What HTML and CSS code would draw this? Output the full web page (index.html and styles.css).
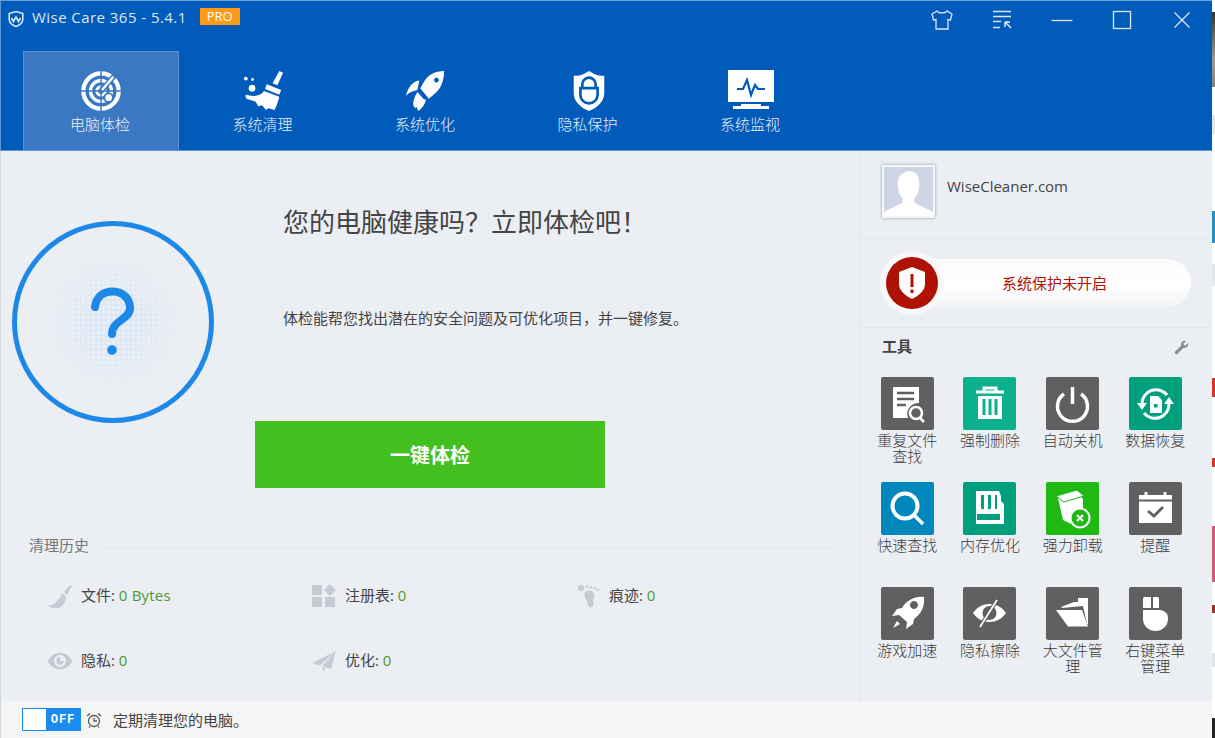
FILE: index.html
```html
<!DOCTYPE html>
<html lang="zh-CN">
<head>
  <meta charset="UTF-8" />
  <title>Wise Care 365</title>
  <link rel="stylesheet" href="styles.css">
</head>
<body>
  <div class="window">
    <div class="top-bar">
      <div class="title-row">
        <svg class="app-logo" viewBox="0 0 18 18"><path d="M9 1.500 L15.800 3.600 V9 C15.800 12.600 12.600 15.200 9 16.500 C5.400 15.200 2.200 12.600 2.200 9 V3.600 Z" fill="none" stroke="#dce8f5" stroke-width="1.600"/><path d="M4.500 8 L6.500 11.500 L9 7 L11.500 11.500 L13.500 8" fill="none" stroke="#dce8f5" stroke-width="1.600"/></svg>
        <span class="app-name">Wise Care 365 - 5.4.1</span>
        <span class="pro-badge">PRO</span>
        <div class="win-btns">
          <svg class="win-btn" viewBox="0 0 30 24"><path d="M10 3 L5 6 L6.500 12 L9 11.500 V21 H21 V11.500 L23.500 12 L25 6 L20 3 C19 5.500 11 5.500 10 3 Z" fill="none" stroke="#dce8f5" stroke-width="1.300"/></svg>
          <svg class="win-btn" viewBox="0 0 30 24"><path d="M6 3.500 H24 M6 8.500 H24 M6 13.500 H14 M6 19.500 H13" stroke="#dce8f5" stroke-width="1.300" fill="none"/><path d="M18 14 H23 M18 14 V19 M18.500 14.500 L24 20" stroke="#dce8f5" stroke-width="1.500" fill="none"/></svg>
          <svg class="win-btn" viewBox="0 0 30 24"><path d="M4.500 12.500 H25.500" stroke="#dce8f5" stroke-width="1.300"/></svg>
          <svg class="win-btn" viewBox="0 0 30 24"><rect x="6.500" y="3.500" width="17" height="17" fill="none" stroke="#dce8f5" stroke-width="1.300"/></svg>
          <svg class="win-btn" viewBox="0 0 30 24"><path d="M7.500 4.500 L22.500 19.500 M22.500 4.500 L7.500 19.500" stroke="#dce8f5" stroke-width="1.300"/></svg>
        </div>
      </div>
      <nav class="tabs">
        <a class="tab active">
          <svg class="tab-icon" viewBox="0 0 44 44" fill="none" stroke="#fff"><circle cx="22" cy="22" r="18.500" stroke-width="4.500"/><circle cx="22" cy="22" r="11" stroke-width="3.500"/><circle cx="22" cy="22" r="4.500" stroke-width="3"/><path d="M22 1 V43 M1 22 H43" stroke="#3b78c2" stroke-width="1.500"/><path d="M23 21 L36 6" stroke="#3b78c2" stroke-width="5.500"/><path d="M23 21 L35 7" stroke-width="2.500"/><circle cx="30" cy="29" r="5.500" fill="#3b78c2" stroke="none"/><circle cx="30" cy="29" r="3.500" fill="#fff" stroke="none"/></svg>
          <span>电脑体检</span>
        </a>
        <a class="tab">
          <svg class="tab-icon" viewBox="0 0 44 44" fill="#fff"><circle cx="3" cy="9" r="2"/><circle cx="10" cy="10" r="1.500"/><circle cx="9.500" cy="19" r="3.500"/><path d="M38 1 L42 3 L36 16 L31 14 Z"/><path d="M25 15 L40 21 L38 26 L23 20 Z"/><path d="M22 22 L38 28 C37 33 35 38 33 42 L27 40 L24 42 L20 37 L16 38 L13 33 L6 31 C3 30 2 28 3 26 C10 28 18 28 22 22 Z"/></svg>
          <span>系统清理</span>
        </a>
        <a class="tab">
          <svg class="tab-icon" viewBox="0 0 44 44" fill="#fff"><path d="M41 1 C32 1 24 5 20 12 L16 19 L25 30 L32 24 C38 19 41 10 41 1 Z M33 8 A2.500 2.500 0 1 1 32.900 8 Z" fill-rule="evenodd"/><path d="M15 11 C8 12 3 18 1 27 C5 23 9 22 13 21 Z"/><path d="M22 31 C21 36 18 40 14 43 C12 40 12 37 14 34 L18 31 Z"/><path d="M13 23 L20 31 L11 40 C8 38 7 33 13 23 Z"/></svg>
          <span>系统优化</span>
        </a>
        <a class="tab">
          <svg class="tab-icon" viewBox="0 0 44 44"><path d="M22 1 L27 4 C30 6 34 6 38 6 V24 C38 33 31 39 22 43 C13 39 6 33 6 24 V6 C10 6 14 6 17 4 Z" fill="#fff"/><path d="M15 19 V15 A7 7 0 0 1 29 15 V19" fill="none" stroke="#005bbb" stroke-width="2.800"/><path d="M13 19 H31 V26 A9 9 0 0 1 13 26 Z" fill="none" stroke="#005bbb" stroke-width="2.800"/></svg>
          <span>隐私保护</span>
        </a>
        <a class="tab">
          <svg class="tab-icon monitor" viewBox="0 0 46 40"><path d="M0 0 H46 V32 H0 Z" fill="#fff"/><path d="M9 19 H15 L19 10 L23 25 L27 15 L30 19 H37" fill="none" stroke="#005bbb" stroke-width="2.200"/><path d="M13 34 H33 V36 H41 V39 H5 V36 H13 Z" fill="#fff"/></svg>
          <span>系统监视</span>
        </a>
      </nav>
    </div>

    <div class="content">
      <main class="main">
        <section class="hero">
          <div class="scan-ring">
            <div class="scan-dots"></div>
            <svg class="scan-mark" viewBox="0 0 50 70"><path d="M7 20 C8 10 15 4.500 25 4.500 C35 4.500 42 12 42 21 C42 33 24 33 24 47" fill="none" stroke="#1e88e8" stroke-width="8" stroke-linecap="round"/><circle cx="24" cy="63" r="4.800" fill="#1e88e8"/></svg>
          </div>
          <div class="hero-text">
            <h1>您的电脑健康吗？立即体检吧！</h1>
            <p>体检能帮您找出潜在的安全问题及可优化项目，并一键修复。</p>
            <button class="scan-btn">一键体检</button>
          </div>
        </section>

        <section class="history">
          <div class="history-head"><span>清理历史</span><i></i></div>
          <div class="history-grid">
            <div class="history-item">
              <svg viewBox="0 0 24 24" fill="#c5cbd3"><path d="M22 1 L24 2 L19 11 L16 8 Z"/><path d="M14 9 L18 13 C18 18 15 22 11 24 C7 24 3 24 0 22 C6 21 11 17 14 9 Z"/></svg>
              <span>文件: <b>0 Bytes</b></span>
            </div>
            <div class="history-item">
              <svg viewBox="0 0 24 24" fill="#c5cbd3"><rect x="0" y="1" width="10" height="10"/><rect x="0" y="13" width="10" height="10"/><rect x="13" y="13" width="10" height="10"/><path d="M18 0 L24 6 L18 12 L12 6 Z"/></svg>
              <span>注册表: <b>0</b></span>
            </div>
            <div class="history-item">
              <svg viewBox="0 0 24 24" fill="#c5cbd3"><circle cx="5" cy="4" r="3"/><circle cx="11" cy="2.500" r="1.300"/><circle cx="15" cy="3" r="1.300"/><circle cx="19" cy="4" r="1.300"/><circle cx="22" cy="6" r="1.300"/><path d="M9 8 C14 5 20 8 18 14 C17 17 18 20 17 22 C16 24 12 24 12 21 C12 17 7 13 9 8 Z"/></svg>
              <span>痕迹: <b>0</b></span>
            </div>
            <div class="history-item">
              <svg viewBox="0 0 26 24" fill="#c5cbd3"><path fill-rule="evenodd" d="M0 12 C5 0 21 0 26 12 C21 24 5 24 0 12 Z M13 5.500 A6.500 6.500 0 1 0 13.100 5.500 Z"/><path d="M13 8 A4 4 0 1 0 17 12 L13 12 Z"/></svg>
              <span>隐私: <b>0</b></span>
            </div>
            <div class="history-item">
              <svg viewBox="0 0 24 24" fill="#c5cbd3"><path d="M24 2 L0 14 L8 16.500 Z"/><path d="M24 2 L10 17 L19 20 Z"/><path d="M10 18 L12 23 L13 19 Z"/></svg>
              <span>优化: <b>0</b></span>
            </div>
          </div>
        </section>
      </main>

      <aside class="side">
        <div class="profile">
          <div class="avatar">
            <svg viewBox="0 0 50 50"><rect width="50" height="50" fill="#ced6e6"/><path d="M25 4 C32 4 36 8 36 17 C36 24 34 29 31 32 V36 C36 40 44 42 50 46 V50 H0 V46 C6 42 14 40 19 36 V32 C16 29 14 24 14 17 C14 9 18 6 25 4 Z" fill="#fff"/></svg>
          </div>
          <span>WiseCleaner.com</span>
        </div>
        <div class="protect">
          <div class="protect-pill">系统保护未开启</div>
          <div class="protect-badge">
            <svg viewBox="0 0 52 52"><circle cx="26" cy="26" r="26" fill="#b01105"/><path d="M26 10 L39 15 V27 C39 34 32 39 26 42 C20 39 13 34 13 27 V15 Z" fill="#fff"/><path d="M24.500 17 H27.500 V30 H24.500 Z M24.500 32.500 H27.500 V36 H24.500 Z" fill="#b01105"/></svg>
          </div>
        </div>
        <div class="tools-head">
          <strong>工具</strong>
          <svg viewBox="0 0 16 16"><path d="M15 3 L12 6 L10 4 L13 1 C10 0 7 2 7.500 6 L1 12.500 C0 14 2 16 3.500 15 L10 8.500 C14 9 16 6 15 3 Z" fill="#8c9096"/></svg>
        </div>
        <div class="tools">
          <div class="tool">
            <svg viewBox="0 0 53 53"><rect width="53" height="53" rx="2" fill="#606060"/><path d="M12 10 H38 V26 A11 11 0 0 0 27 41 H12 Z" fill="#fff"/><path d="M16 16 H33 M16 22 H33 M16 28 H25" stroke="#606060" stroke-width="2.500"/><circle cx="35" cy="36" r="6" fill="none" stroke="#fff" stroke-width="2.500"/><path d="M39 41 L43 45" stroke="#fff" stroke-width="2.500"/></svg>
            <span>重复文件查找</span>
          </div>
          <div class="tool">
            <svg viewBox="0 0 53 53"><rect width="53" height="53" rx="2" fill="#0cb08c"/><path d="M13 15 H41 M21 14 V11 H33 V14" stroke="#fff" stroke-width="3" fill="none"/><path d="M15 19 H39 V42 H15 Z" fill="#fff"/><path d="M21 22 V38 M27 22 V38 M33 22 V38" stroke="#0cb08c" stroke-width="3"/></svg>
            <span>强制删除</span>
          </div>
          <div class="tool">
            <svg viewBox="0 0 53 53"><rect width="53" height="53" rx="2" fill="#606060"/><path d="M18 17 A15 15 0 1 0 35 17" fill="none" stroke="#fff" stroke-width="3.500"/><path d="M26.500 10 V27" stroke="#fff" stroke-width="3.500"/></svg>
            <span>自动关机</span>
          </div>
          <div class="tool">
            <svg viewBox="0 0 53 53"><rect width="53" height="53" rx="2" fill="#00a07e"/><path d="M13 27 A14 14 0 0 1 38 18 M40 27 A14 14 0 0 1 15 36" fill="none" stroke="#fff" stroke-width="3"/><path d="M8 26 H18 L13 33 Z M35 27 H45 L40 20 Z" fill="#fff"/><path d="M21 19 H29 L33 23 V36 H21 Z" fill="#fff"/><rect x="25" y="27" width="3.500" height="3.500" fill="#00a07e"/></svg>
            <span>数据恢复</span>
          </div>
          <div class="tool">
            <svg viewBox="0 0 53 53"><rect width="53" height="53" rx="2" fill="#0088bd"/><circle cx="24" cy="24" r="12.500" fill="none" stroke="#fff" stroke-width="4"/><path d="M33 33 L42 42" stroke="#fff" stroke-width="3.500"/></svg>
            <span>快速查找</span>
          </div>
          <div class="tool">
            <svg viewBox="0 0 53 53"><rect width="53" height="53" rx="2" fill="#00a07e"/><path d="M13 9 H36 L38 14 V19 L41 22 V42 H13 Z" fill="#fff"/><path d="M18 13 H21 V27 H18 Z M25 13 H28 V27 H25 Z M32 13 H34 V27 H32 Z M14 32 H37 V38 H14 Z" fill="#00a07e"/></svg>
            <span>内存优化</span>
          </div>
          <div class="tool">
            <svg viewBox="0 0 53 53"><rect width="53" height="53" rx="2" fill="#20b812"/><path d="M12 16 L30 9 L37 17 V30 A11 11 0 0 0 25 42 L17 38 Z" fill="#fff"/><path d="M10 14 L31 8 L38 14 L18 20 Z" fill="#fff" stroke="#20b812" stroke-width="1"/><circle cx="34" cy="36" r="9.500" fill="#20b812" stroke="#fff" stroke-width="2"/><path d="M31 33 L37 39 M37 33 L31 39" stroke="#fff" stroke-width="2.200"/></svg>
            <span>强力卸载</span>
          </div>
          <div class="tool">
            <svg viewBox="0 0 53 53"><rect width="53" height="53" rx="2" fill="#606060"/><path d="M10 13 H43 V41 H10 Z" fill="#fff"/><path d="M10 18.500 H43" stroke="#606060" stroke-width="1.800"/><path d="M17 10 V15 M36 10 V15" stroke="#fff" stroke-width="3"/><path d="M19 29 L25 34 L34 25" fill="none" stroke="#606060" stroke-width="2.800"/></svg>
            <span>提醒</span>
          </div>
          <div class="tool">
            <svg viewBox="0 0 53 53"><rect width="53" height="53" rx="2" fill="#606060"/><path d="M43 10 C34 9 26 13 21 21 L16 22 L11 29 L18 28 L26 35 L25 42 L32 37 L33 32 C40 27 44 20 43 10 Z M33 14 A4 4 0 1 1 32.900 14 Z" fill="#fff" fill-rule="evenodd"/><path d="M16 34 L19 37 L12 41 Z" fill="#fff"/></svg>
            <span>游戏加速</span>
          </div>
          <div class="tool">
            <svg viewBox="0 0 53 53"><rect width="53" height="53" rx="2" fill="#606060"/><path d="M10 26 C18 14 35 14 43 26 C35 38 18 38 10 26 Z" fill="#fff"/><circle cx="26.500" cy="26" r="7" fill="#606060"/><path d="M17 40 L34 13" stroke="#606060" stroke-width="4"/><path d="M17 40 L34 13" stroke="#fff" stroke-width="1.800"/></svg>
            <span>隐私擦除</span>
          </div>
          <div class="tool">
            <svg viewBox="0 0 53 53"><rect width="53" height="53" rx="2" fill="#606060"/><path d="M15 20 L28 15 H32 V11 H42 V37 H41 L37 19 L16 21 Z" fill="#fff"/><path d="M10 23 H36 L42 39.500 H22 Z" fill="#fff"/></svg>
            <span>大文件管理</span>
          </div>
          <div class="tool">
            <svg viewBox="0 0 53 53"><rect width="53" height="53" rx="2" fill="#606060"/><path d="M14 12 C14 10.500 15 10 16 10 H22 V21 H14 Z M24 10 H28 C29 10 30 10.500 30 12 V21 H24 Z" fill="#fff"/><path d="M14 23 H30 C35 23 39 26 39 31 V32 A12.500 12 0 0 1 14 32 Z" fill="#fff"/></svg>
            <span>右键菜单管理</span>
          </div>
        </div>
      </aside>
    </div>

    <footer class="footer">
      <div class="toggle"><i></i><span>OFF</span></div>
      <svg class="clock" viewBox="0 0 16 16" fill="none" stroke="#555" stroke-width="1.300"><circle cx="8" cy="9" r="5.500"/><path d="M8 6 V9 H11 M1 4 L4 1.500 M15 4 L12 1.500 M4 14 L3 15.500 M12 14 L13 15.500"/></svg>
      <span>定期清理您的电脑。</span>
    </footer>
  </div>
  <div class="desktop-edge"></div>
</body>
</html>
```

FILE: styles.css
```css
html, body { margin: 0; height: 100%; overflow: hidden; }
body {
  display: flex;
  background: #fff;
  font-family: "Open Sans", "Noto Sans CJK SC", sans-serif;
  color: #444;
}
.window {
  width: 1212px;
  height: 738px;
  display: flex;
  flex-direction: column;
  flex: none;
}
.desktop-edge {
  flex: 1;
  background: linear-gradient(#fff 0, #fff 12px, #3a322a 12px, #a39a8c 60px, #8a8074 87px, #fff 87px, #fff 115px, #e6e6e6 115px, #e6e6e6 134px, #fff 134px, #fff 211px, #2a8fc0 211px, #2a8fc0 243px, #fff 243px, #fff 264px, #e6e6e6 264px, #e6e6e6 286px, #fff 286px, #fff 378px, #d9342c 378px, #d9342c 397px, #fff 397px, #fff 458px, #d9342c 458px, #d9342c 467px, #fff 467px, #fff 526px, #d05a7a 526px, #d05a7a 582px, #fff 582px, #fff 605px, #a03030 605px, #a03030 613px, #fff 613px, #fff 653px, #e6e6e6 653px, #e6e6e6 667px, #fff 667px, #fff 718px, #222 718px);
}

/* top bar */
.top-bar {
  height: 151px;
  flex: none;
  box-sizing: border-box;
  background: #005bbb;
  border-top: 1px solid #6ea0d6;
  border-left: 1px solid #5a96d8;
  border-bottom: 1px solid #5a96d8;
}
.title-row {
  display: flex;
  align-items: center;
  height: 34px;
  padding-left: 6px;
  color: #dce8f5;
  font-size: 15px;
}
.app-logo { width: 18px; height: 18px; margin-right: 7px; margin-top: 2px; }
.app-name { letter-spacing: 0.45px; margin-top: -3px; }
.pro-badge {
  background: #ff9a16;
  color: #fff;
  font-size: 13px;
  line-height: 17px;
  width: 40px;
  text-align: center;
  margin-left: 13px;
  margin-top: -4px;
}
.win-btns {
  margin-left: auto;
  display: flex;
  gap: 30px;
  padding-right: 15px;
}
.win-btn { width: 30px; height: 24px; display: block; margin-top: 3px; }

.tabs {
  display: flex;
  gap: 6.500px;
  padding: 16px 0 0 22px;
}
.tab {
  width: 156px;
  height: 99px;
  box-sizing: border-box;
  display: flex;
  flex-direction: column;
  align-items: center;
  padding-top: 19px;
  color: #e8f0fa;
  font-size: 15px;
  line-height: 20px;
  font-family: "Noto Sans CJK SC", sans-serif;
  font-weight: 300;
}
.tab span { margin-right: 2px; }
.tab.active {
  background: #3a78c4;
  border: 1px solid #5a90d2;
  border-bottom: none;
  padding-top: 18px;
}
.tab-icon { width: 42px; height: 42px; margin-bottom: 2px; flex: none; }
.tab-icon.monitor { width: 46px; height: 40px; margin-bottom: 4px; }

/* main area */
.content {
  flex: 1;
  display: flex;
  min-height: 0;
  background: #ebeef3;
  border-left: 1px solid #d4d7dc;
}
.main { flex: 1; min-width: 0; }
.hero {
  display: flex;
  padding: 70px 0 0 11px;
  height: 337px;
  box-sizing: border-box;
}
.scan-ring {
  width: 202px;
  height: 202px;
  box-sizing: border-box;
  flex: none;
  border: 5px solid #1e88e8;
  border-radius: 50%;
  display: flex;
  align-items: center;
  justify-content: center;
  position: relative;
}
.scan-dots {
  position: absolute;
  left: 28px;
  top: 28px;
  width: 136px;
  height: 136px;
  background-image:
    linear-gradient(#dbe8f6 2px, transparent 2px),
    linear-gradient(90deg, #dbe8f6 2px, transparent 2px);
  background-size: 5px 5px;
  -webkit-mask-image: radial-gradient(circle, #000 25%, transparent 70%);
  mask-image: radial-gradient(circle, #000 25%, transparent 70%);
}
.scan-mark { width: 50px; height: 70px; position: relative; }
.hero-text { margin-left: 69px; }
.hero-text h1 {
  margin: -18px 0 0;
  font-family: "Noto Sans CJK SC", sans-serif;
  font-size: 26px;
  font-weight: 400;
  line-height: 36px;
  color: #444;
  white-space: nowrap;
}
.hero-text p {
  margin: 68px 0 0;
  font-family: "Noto Sans CJK SC", sans-serif;
  font-size: 15px;
  line-height: 22px;
  color: #444;
}
.scan-btn {
  display: block;
  width: 350px;
  height: 67px;
  margin: 92px 0 0 -28px;
  border: none;
  background: #43bf1f;
  color: #fff;
  font-family: "Noto Sans CJK SC", sans-serif;
  font-size: 20px;
  font-weight: 700;
}

.history { padding: 46px 24px 0 28px; }
.history-head { display: flex; align-items: center; gap: 15px; font-family: "Noto Sans CJK SC", sans-serif; font-size: 15px; color: #777; line-height: 22px; }
.history-head i { flex: 1; height: 1px; background: #e1e4e9; margin-top: 4px; }
.history-grid {
  display: grid;
  grid-template-columns: repeat(3, 264px);
  grid-auto-rows: 65px;
  padding: 27px 0 0 19px;
}
.history-item {
  display: flex;
  align-items: flex-start;
  gap: 9px;
  font-family: "Open Sans", "Noto Sans CJK SC", sans-serif;
  font-size: 15px;
  line-height: 24px;
  color: #444;
}
.history-item svg { width: 24px; height: 24px; flex: none; margin-top: 1px; }
.history-item b { font-weight: 400; color: #4f9a2c; letter-spacing: 0.2px; }

/* side panel */
.side {
  width: 353px;
  flex: none;
  box-sizing: border-box;
  border-left: 1px solid #e1e4e9;
}
.profile {
  height: 88px;
  box-sizing: border-box;
  display: flex;
  align-items: center;
  gap: 12px;
  padding: 0 0 7px 22px;
  border-bottom: 1px solid #e1e4e9;
  font-size: 15px;
  color: #444;
}
.profile span { margin-bottom: 10px; }
.avatar {
  width: 53px;
  height: 53px;
  box-sizing: border-box;
  border: 2px solid #f4f5f7;
  box-shadow: 0 0 3px rgba(0,0,0,0.35);
}
.avatar svg { display: block; width: 100%; height: 100%; }
.protect {
  height: 89px;
  box-sizing: border-box;
  border-bottom: 1px solid #e1e4e9;
  position: relative;
  padding: 20px 21px 0 40px;
}
.protect-pill {
  height: 48px;
  border-radius: 24px;
  background: linear-gradient(#fbfbfc, #fff 55%, #f1f3f6);
  color: #b01105;
  font-family: "Noto Sans CJK SC", sans-serif;
  font-size: 15px;
  line-height: 48px;
  text-align: center;
  padding-left: 18px;
}
.protect-badge {
  position: absolute;
  left: 20px;
  top: 12px;
  width: 52px;
  height: 52px;
  padding: 6px;
  border-radius: 50%;
  background: #f8f8f9;
}
.protect-badge svg { display: block; width: 52px; height: 52px; }
.tools-head {
  display: flex;
  align-items: center;
  justify-content: space-between;
  padding: 0 23px 0 22px;
  height: 38px;
  font-family: "Noto Sans CJK SC", sans-serif;
  font-size: 15px;
}
.tools-head strong { font-weight: 700; color: #444; margin-bottom: 4px; }
.tools-head svg { width: 15px; height: 15px; }
.tools {
  display: grid;
  grid-template-columns: repeat(4, 82.670px);
  grid-auto-rows: 105px;
  padding: 11px 0 0 6px;
}
.tool {
  display: flex;
  flex-direction: column;
  align-items: center;
  font-family: "Noto Sans CJK SC", sans-serif;
  font-size: 15px;
  line-height: 16px;
  font-weight: 300;
  color: #3a3a3a;
  text-align: center;
}
.tool svg { width: 53px; height: 53px; flex: none; margin-bottom: 2px; }
.tool span { width: 61px; }

/* footer */
.footer {
  height: 37px;
  flex: none;
  display: flex;
  align-items: center;
  box-sizing: border-box;
  padding-left: 21px;
  background: #f5f5f5;
  border-left: 1px solid #d4d7dc;
  font-family: "Noto Sans CJK SC", sans-serif;
  font-size: 15px;
  color: #444;
}
.toggle {
  width: 59px;
  height: 23px;
  box-sizing: border-box;
  border: 1px solid #1a8cf0;
  background: #1a8cf0;
  display: flex;
  align-items: center;
}
.toggle i { width: 23px; height: 21px; background: #fff; }
.toggle span {
  flex: 1;
  text-align: center;
  color: #fff;
  font-family: "Liberation Mono", monospace;
  font-size: 12px;
  font-weight: 700;
  letter-spacing: 1px;
}
.clock { width: 16px; height: 16px; margin: 0 11px 0 5px; }
```
